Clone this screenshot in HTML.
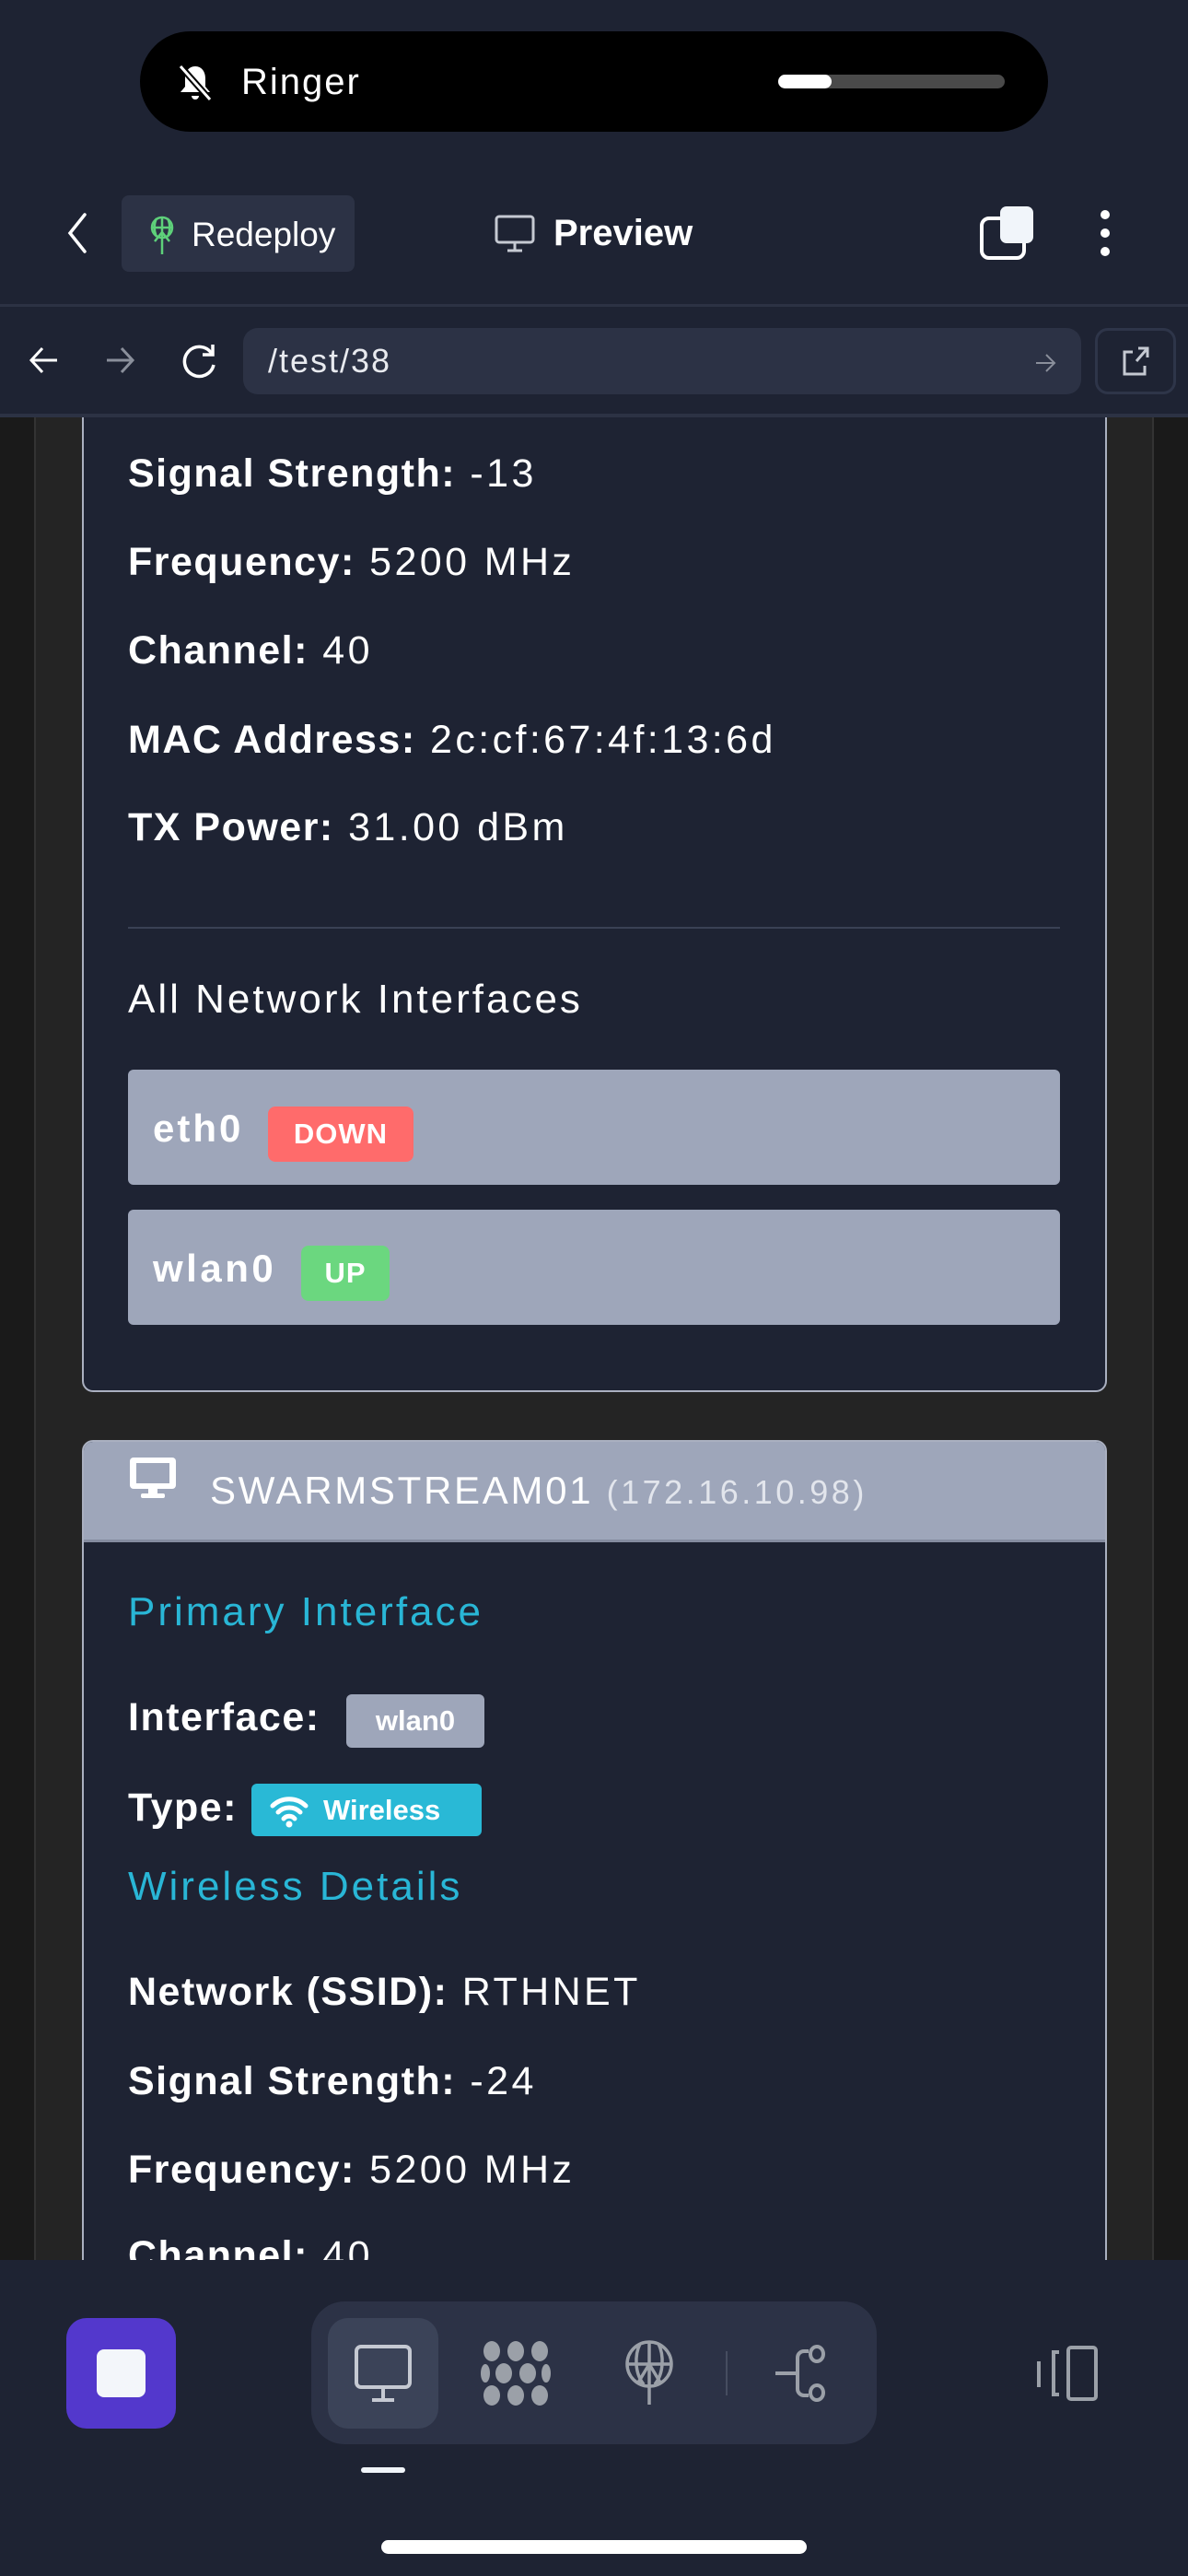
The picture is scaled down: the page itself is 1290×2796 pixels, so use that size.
<!DOCTYPE html>
<html><head><meta charset="utf-8"><style>
*{margin:0;padding:0;box-sizing:border-box}
body{width:1290px;height:2796px;background:#1e2333;position:relative;overflow:hidden;font-family:"Liberation Sans",sans-serif;color:#fff}
.a{position:absolute}
.t{position:absolute;font-size:43px;line-height:48px;white-space:nowrap;letter-spacing:3.4px}
.t b{font-weight:bold;letter-spacing:1.5px}
</style></head><body>
<!-- content area -->
<div class="a" style="left:0;top:452px;width:1290px;height:2001px;background:#1a1a1a"></div>
<div class="a" style="left:37px;top:452px;width:1216px;height:2001px;background:#242424;border-left:2px solid #333;border-right:2px solid #333"></div>
<!-- card 1 -->
<div class="a" style="left:89px;top:452px;width:1113px;height:1059px;background:#1e2333;border:2px solid #aab0c0;border-top:none;border-radius:0 0 12px 12px"></div>
<div class="t" style="left:139px;top:490px"><b>Signal Strength:</b> -13</div>
<div class="t" style="left:139px;top:586px"><b>Frequency:</b> 5200 MHz</div>
<div class="t" style="left:139px;top:682px"><b>Channel:</b> 40</div>
<div class="t" style="left:139px;top:779px"><b>MAC Address:</b> 2c:cf:67:4f:13:6d</div>
<div class="t" style="left:139px;top:874px"><b>TX Power:</b> 31.00 dBm</div>
<div class="a" style="left:139px;top:1006px;width:1012px;height:2px;background:#3a4154"></div>
<div class="t" style="left:139px;top:1061px;font-size:44px;letter-spacing:3px">All Network Interfaces</div>
<div class="a" style="left:139px;top:1161px;width:1012px;height:125px;background:#9ea6ba;border-radius:6px"></div>
<div class="t" style="left:166px;top:1201px;font-size:42px;font-weight:bold;letter-spacing:3px">eth0</div>
<div class="a" style="left:291px;top:1201px;width:158px;height:60px;background:#ff6b6b;border-radius:8px;font-weight:bold;font-size:31px;line-height:60px;text-align:center;letter-spacing:1px">DOWN</div>
<div class="a" style="left:139px;top:1313px;width:1012px;height:125px;background:#9ea6ba;border-radius:6px"></div>
<div class="t" style="left:166px;top:1353px;font-size:42px;font-weight:bold;letter-spacing:3.5px">wlan0</div>
<div class="a" style="left:327px;top:1352px;width:96px;height:60px;background:#6bd77f;border-radius:8px;font-weight:bold;font-size:31px;line-height:60px;text-align:center;letter-spacing:1px">UP</div>
<!-- card 2 -->
<div class="a" style="left:89px;top:1563px;width:1113px;height:900px;background:#1e2333;border:2px solid #aab0c0;border-radius:12px 12px 0 0;overflow:hidden">
 <div class="a" style="left:0;top:0;width:1113px;height:109px;background:#9ea6ba;border-bottom:3px solid #858ca0"></div>
</div>
<svg class="a" style="left:139px;top:1580px" width="54" height="48" viewBox="0 0 54 48"><rect x="2" y="2" width="50" height="34" rx="4" fill="#fff"/><rect x="9" y="8" width="36" height="22" fill="#9ea6ba"/><rect x="22" y="36" width="10" height="6" fill="#fff"/><rect x="14" y="41" width="26" height="5" rx="2" fill="#fff"/></svg>
<div class="t" style="left:228px;top:1594px;font-size:42px;letter-spacing:2.7px">SWARMSTREAM01 <span style="font-size:36px;color:#e2e5ec;letter-spacing:3.5px">(172.16.10.98)</span></div>
<div class="t" style="left:139px;top:1726px;font-size:44px;color:#29b6d6;letter-spacing:3px">Primary Interface</div>
<div class="t" style="left:139px;top:1840px"><b>Interface:</b></div>
<div class="a" style="left:376px;top:1839px;width:150px;height:58px;background:#9ea6ba;border-radius:6px;font-weight:bold;font-size:31px;line-height:58px;text-align:center">wlan0</div>
<div class="t" style="left:139px;top:1938px"><b>Type:</b></div>
<div class="a" style="left:273px;top:1936px;width:250px;height:57px;background:#29b9d6;border-radius:6px;font-weight:bold;font-size:31px;line-height:57px;padding-left:78px">Wireless</div>
<svg class="a" style="left:292px;top:1946px" width="44" height="38" viewBox="0 0 44 38"><path d="M4 14a26 26 0 0 1 36 0M10 21a17 17 0 0 1 24 0M16 28a8 8 0 0 1 12 0" stroke="#fff" stroke-width="5" fill="none" stroke-linecap="round"/><circle cx="22" cy="34" r="3.5" fill="#fff"/></svg>
<div class="t" style="left:139px;top:2024px;font-size:44px;color:#29b6d6;letter-spacing:3px">Wireless Details</div>
<div class="t" style="left:139px;top:2138px"><b>Network (SSID):</b> RTHNET</div>
<div class="t" style="left:139px;top:2235px"><b>Signal Strength:</b> -24</div>
<div class="t" style="left:139px;top:2331px"><b>Frequency:</b> 5200 MHz</div>
<div class="t" style="left:139px;top:2424px"><b>Channel:</b> 40</div>
<!-- top header -->
<div class="a" style="left:0;top:0;width:1290px;height:452px;background:#1e2333"></div>
<div class="a" style="left:152px;top:34px;width:986px;height:109px;background:#000;border-radius:55px"></div>
<svg class="a" style="left:190px;top:68px" width="44" height="44" viewBox="0 0 44 44"><path d="M22 4c-7 0-11 6-11 13v9l-5 6h32l-5-6v-9c0-7-4-13-11-13z" fill="#fff"/><path d="M18 36a4 4 0 0 0 8 0z" fill="#fff"/><path d="M6 4l32 36" stroke="#000" stroke-width="7"/><path d="M6 4l32 36" stroke="#fff" stroke-width="3"/></svg>
<div class="t" style="left:262px;top:65px;font-size:40px;letter-spacing:2px">Ringer</div>
<div class="a" style="left:845px;top:81px;width:246px;height:15px;background:#4a4a4a;border-radius:8px"></div>
<div class="a" style="left:845px;top:81px;width:58px;height:15px;background:#fff;border-radius:8px"></div>
<svg class="a" style="left:68px;top:230px" width="30" height="46" viewBox="0 0 30 46"><path d="M24 3L8 23l16 20" stroke="#fff" stroke-width="3.5" fill="none" stroke-linecap="round"/></svg>
<div class="a" style="left:132px;top:212px;width:253px;height:83px;background:#2c3245;border-radius:8px"></div>
<svg class="a" style="left:160px;top:234px" width="32" height="42" viewBox="0 0 32 42"><circle cx="16" cy="13" r="11" fill="none" stroke="#5ed17a" stroke-width="2.5"/><path d="M5 13h22M16 2v40M10 3c-3 6-3 14 0 20M22 3c3 6 3 14 0 20M8 28l8-10 8 10" stroke="#5ed17a" stroke-width="2.5" fill="none"/></svg>
<div class="t" style="left:208px;top:231px;font-size:37px;letter-spacing:0">Redeploy</div>
<svg class="a" style="left:536px;top:232px" width="46" height="44" viewBox="0 0 46 44"><rect x="3" y="3" width="40" height="28" rx="3" fill="none" stroke="#c5c9d2" stroke-width="3"/><path d="M23 31v8M15 40h16" stroke="#c5c9d2" stroke-width="3"/></svg>
<div class="t" style="left:601px;top:229px;font-size:40px;font-weight:bold;letter-spacing:0">Preview</div>
<div class="a" style="left:1064px;top:235px;width:50px;height:47px;border:4px solid #fff;border-radius:10px"></div>
<div class="a" style="left:1086px;top:224px;width:36px;height:40px;background:#f1f5fa;border-radius:7px"></div>
<div class="a" style="left:1195px;top:228px;width:10px;height:10px;background:#fff;border-radius:50%"></div>
<div class="a" style="left:1195px;top:248px;width:10px;height:10px;background:#fff;border-radius:50%"></div>
<div class="a" style="left:1195px;top:268px;width:10px;height:10px;background:#fff;border-radius:50%"></div>
<div class="a" style="left:0;top:330px;width:1290px;height:3px;background:#2c3244"></div>
<svg class="a" style="left:30px;top:373px" width="36" height="36" viewBox="0 0 36 36"><path d="M32 18H4M16 5L4 18l12 13" stroke="#fff" stroke-width="3" fill="none"/></svg>
<svg class="a" style="left:112px;top:373px" width="36" height="36" viewBox="0 0 36 36"><path d="M4 18h28M20 5l12 13-12 13" stroke="#8a8f9b" stroke-width="3" fill="none"/></svg>
<svg class="a" style="left:194px;top:370px" width="44" height="44" viewBox="0 0 44 44"><path d="M36 14A16 16 0 1 0 38 26" stroke="#fff" stroke-width="3.5" fill="none"/><path d="M37 4v11H26" stroke="#fff" stroke-width="3.5" fill="none"/></svg>
<div class="a" style="left:264px;top:356px;width:910px;height:72px;background:#2c3245;border-radius:16px"></div>
<div class="t" style="left:291px;top:368px;font-size:36px;color:#e8eaef;letter-spacing:2px">/test/38</div>
<svg class="a" style="left:1122px;top:381px" width="26" height="26" viewBox="0 0 26 26"><path d="M3 13h20M14 4l9 9-9 9" stroke="#8a8f9b" stroke-width="2" fill="none"/></svg>
<div class="a" style="left:1189px;top:356px;width:88px;height:72px;border:3px solid #2e3549;border-radius:14px"></div>
<svg class="a" style="left:1216px;top:374px" width="34" height="36" viewBox="0 0 34 36"><path d="M14 8H5v24h22v-9M18 18L30 4M20 4h10v10" stroke="#c5c9d2" stroke-width="3" fill="none"/></svg>
<div class="a" style="left:0;top:449px;width:1290px;height:4px;background:#2c3244"></div>
<!-- bottom bar -->
<div class="a" style="left:0;top:2453px;width:1290px;height:343px;background:#1e2333"></div>
<div class="a" style="left:72px;top:2516px;width:119px;height:120px;background:#5338cc;border-radius:22px"></div>
<div class="a" style="left:105px;top:2550px;width:53px;height:52px;background:#f3f6fa;border-radius:8px"></div>
<div class="a" style="left:338px;top:2498px;width:614px;height:155px;background:#2c3246;border-radius:36px"></div>
<div class="a" style="left:356px;top:2516px;width:120px;height:120px;background:#3b4358;border-radius:22px"></div>
<svg class="a" style="left:384px;top:2544px" width="64" height="64" viewBox="0 0 64 64"><rect x="3" y="3" width="58" height="44" rx="5" fill="none" stroke="#c5c9d2" stroke-width="4"/><path d="M32 47v12M20 61h24" stroke="#c5c9d2" stroke-width="4"/></svg>
<svg class="a" style="left:522px;top:2540px" width="76" height="72" viewBox="0 0 76 72"><g fill="#9ba0a8"><ellipse cx="12" cy="12" rx="9" ry="11"/><ellipse cx="38" cy="12" rx="9" ry="11"/><ellipse cx="64" cy="12" rx="9" ry="11"/><ellipse cx="25" cy="36" rx="9" ry="11"/><ellipse cx="51" cy="36" rx="9" ry="11"/><ellipse cx="12" cy="60" rx="9" ry="11"/><ellipse cx="38" cy="60" rx="9" ry="11"/><ellipse cx="64" cy="60" rx="9" ry="11"/><ellipse cx="5" cy="36" rx="5" ry="10"/><ellipse cx="71" cy="36" rx="5" ry="10"/></g></svg>
<svg class="a" style="left:676px;top:2540px" width="58" height="72" viewBox="0 0 58 72"><circle cx="29" cy="26" r="24" fill="none" stroke="#9ba0a8" stroke-width="3.5"/><path d="M5 26h48M19 4c-6 12-6 32 4 44M39 4c6 12 6 32-4 44M29 2v68M17 46l12-20 12 20" stroke="#9ba0a8" stroke-width="3.5" fill="none"/></svg>
<div class="a" style="left:788px;top:2552px;width:2px;height:48px;background:#464d60"></div>
<svg class="a" style="left:840px;top:2545px" width="64" height="64" viewBox="0 0 64 64"><path d="M2 31h24M26 31V14a7 7 0 0 1 7-7h5M26 31v17a7 7 0 0 0 7 7h5" stroke="#9ba0a8" stroke-width="4" fill="none"/><ellipse cx="47" cy="10" rx="7" ry="8" fill="none" stroke="#9ba0a8" stroke-width="4"/><ellipse cx="47" cy="52" rx="7" ry="8" fill="none" stroke="#9ba0a8" stroke-width="4"/></svg>
<div class="a" style="left:392px;top:2678px;width:48px;height:6px;background:#f1f5fa;border-radius:3px"></div>
<svg class="a" style="left:1122px;top:2545px" width="72" height="62" viewBox="0 0 72 62"><rect x="38" y="3" width="30" height="56" rx="3" fill="none" stroke="#9ba0a8" stroke-width="4"/><path d="M28 8h-6v46h6M6 18v28" stroke="#9ba0a8" stroke-width="4" fill="none"/></svg>
<div class="a" style="left:414px;top:2757px;width:462px;height:15px;background:#fff;border-radius:8px"></div>
</body></html>
